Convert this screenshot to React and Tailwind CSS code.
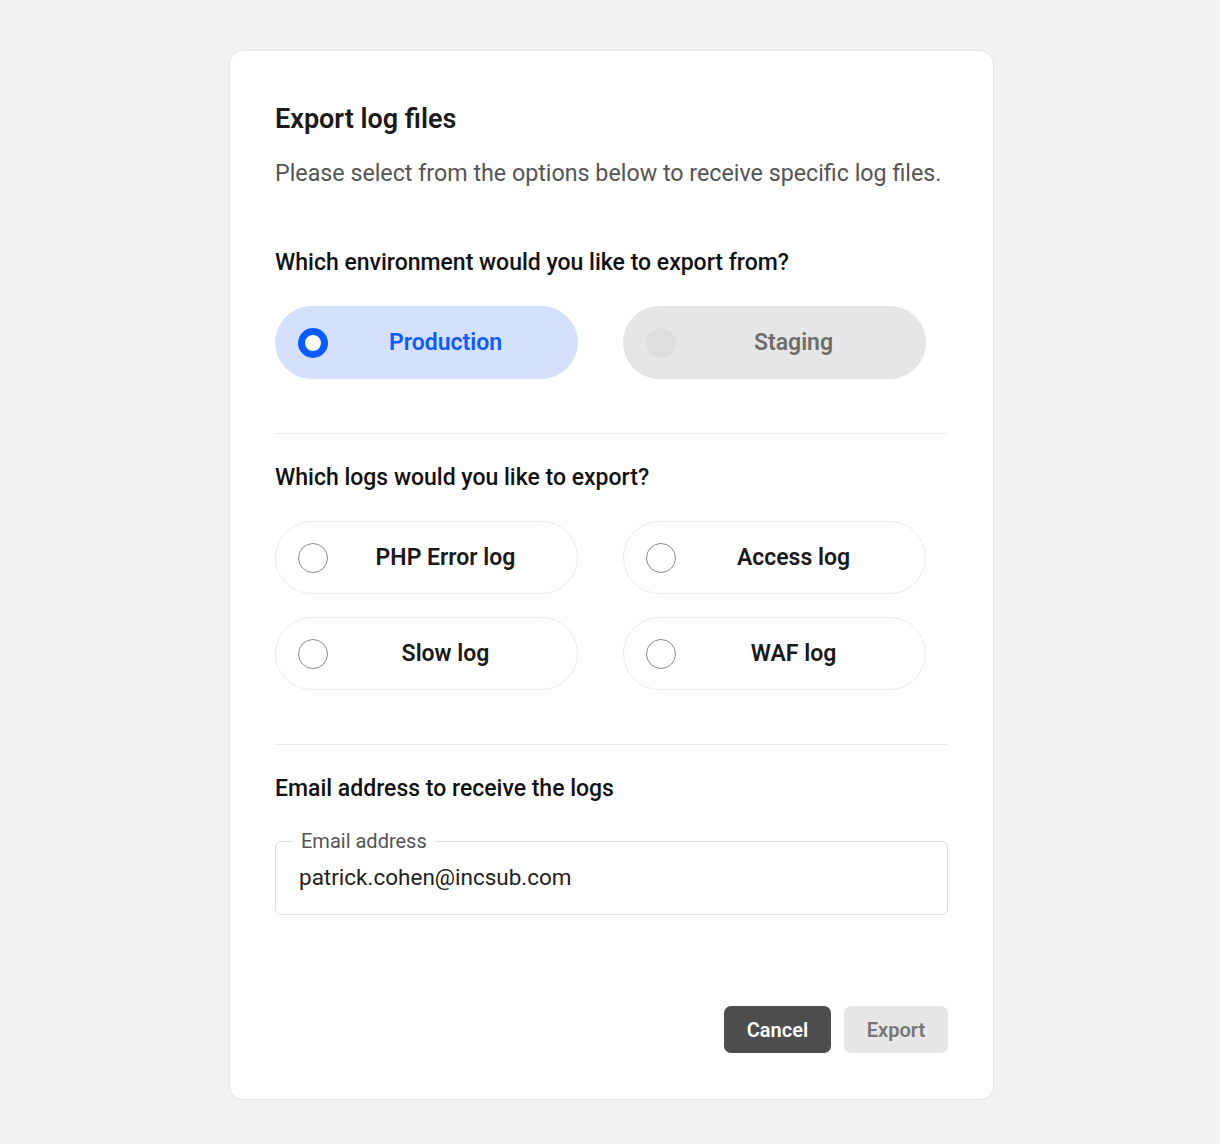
import React, { useState } from 'react';

const LOGS = ['PHP Error log', 'Access log', 'Slow log', 'WAF log'];

function Radio({ checked, disabled }) {
  if (disabled) {
    return <span className="w-[30px] h-[30px] rounded-full bg-[#dddddd] shrink-0"></span>;
  }
  if (checked) {
    return <span className="w-[30px] h-[30px] rounded-full border-[7px] border-[#0a5cff] bg-white shrink-0"></span>;
  }
  return <span className="w-[30px] h-[30px] rounded-full border border-[#8a8a8a] bg-white shrink-0"></span>;
}

function Pill({ label, checked, disabled, onClick }) {
  let cls = 'bg-white border border-[#ececec] text-[#1a1a1a]';
  if (checked) cls = 'bg-[#d5e1fc] border border-[#d5e1fc] text-[#0a5cff]';
  if (disabled) cls = 'bg-[#e6e6e6] border border-[#e3e3e3] text-[#6e6e6e]';
  return (
    <button
      type="button"
      onClick={onClick}
      disabled={disabled}
      className={`w-[303px] h-[73px] rounded-full flex items-center pl-[22px] pr-[14px] ${cls}`}
    >
      <Radio checked={checked} disabled={disabled} />
      <span className="flex-1 text-center text-[23px] font-semibold leading-none">{label}</span>
    </button>
  );
}

export default function App() {
  const [env, setEnv] = useState('Production');
  const [logs, setLogs] = useState([]);
  const [email, setEmail] = useState('patrick.cohen@incsub.com');

  const toggleLog = (l) => {
    setLogs(logs.includes(l) ? logs.filter((x) => x !== l) : [...logs, l]);
  };

  return (
    <div className="min-h-[1144px] bg-[#f2f2f2] pt-[50px] font-['Roboto',sans-serif]">
      <div className="ml-[229px] w-[765px] bg-white border border-[#e6e6e6] rounded-[14px] px-[45px] pt-[52px] pb-[46px] flex flex-col">
        <h1 className="text-[27px] leading-[32px] font-semibold text-[#1a1a1a]">Export log files</h1>
        <p className="mt-[24px] text-[23.25px] leading-[28px] text-[#555555]">
          Please select from the options below to receive specific log files.
        </p>

        <h2 className="mt-[62px] text-[23px] leading-[28px] font-medium text-[#111111]">
          Which environment would you like to export from?
        </h2>
        <div className="mt-[29px] flex gap-[45px]">
          <Pill label="Production" checked={env === 'Production'} onClick={() => setEnv('Production')} />
          <Pill label="Staging" disabled />
        </div>

        <div className="mt-[54px] h-px bg-[#ededed]"></div>

        <h2 className="mt-[30px] text-[23px] leading-[28px] font-medium text-[#111111]">
          Which logs would you like to export?
        </h2>
        <div className="mt-[29px] grid grid-cols-[303px_303px] gap-x-[45px] gap-y-[23px]">
          {LOGS.map((l) => (
            <Pill key={l} label={l} checked={logs.includes(l)} onClick={() => toggleLog(l)} />
          ))}
        </div>

        <div className="mt-[54px] h-px bg-[#ededed]"></div>

        <h2 className="mt-[30px] text-[23px] leading-[28px] font-medium text-[#111111]">
          Email address to receive the logs
        </h2>
        <div className="mt-[38px] relative h-[74px] border border-[#dedede] rounded-[6px] flex items-center">
          <span className="absolute left-[17px] -top-[12px] px-2 bg-white text-[20px] leading-[22px] text-[#555555]">
            Email address
          </span>
          <input
            value={email}
            onChange={(e) => setEmail(e.target.value)}
            className="w-full pl-[23px] pr-4 text-[22.5px] text-[#222222] bg-transparent outline-none"
          />
        </div>

        <div className="mt-[91px] flex justify-end gap-[13px]">
          <button className="w-[107px] h-[47px] rounded-[7px] bg-[#4d4d4d] text-white text-[20px] font-semibold">
            Cancel
          </button>
          <button className="w-[104px] h-[47px] rounded-[7px] bg-[#e6e6e6] text-[#777777] text-[20px] font-semibold">
            Export
          </button>
        </div>
      </div>
    </div>
  );
}
